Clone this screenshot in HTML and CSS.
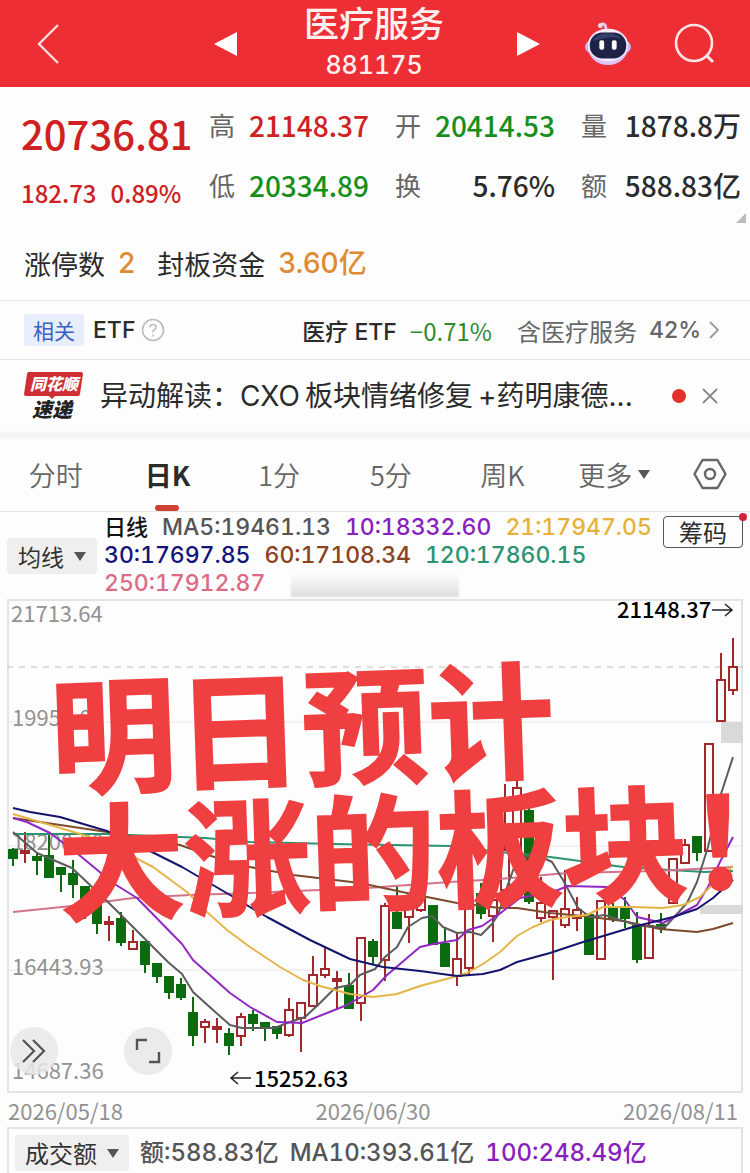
FILE: index.html
```html
<!DOCTYPE html>
<html lang="zh-CN">
<head>
<meta charset="utf-8">
<meta name="viewport" content="width=device-width, initial-scale=1">
<title>医疗服务 881175</title>
<link rel="stylesheet" href="styles.css">
</head>
<body>
<header class="topbar">
  <button class="icon-btn back" aria-label="返回"><svg width="24" height="42" viewBox="0 0 24 42"><path d="M22 2 3 21 22 40" fill="none" stroke="#ffdcdc" stroke-width="2.4"/></svg></button>
  <button class="icon-btn prev" aria-label="上一个"><svg width="24" height="26" viewBox="0 0 24 26"><path d="M0 13 23 1v24z" fill="#fff"/></svg></button>
  <div class="title">
    <h1>医疗服务</h1>
    <p>881175</p>
  </div>
  <button class="icon-btn next" aria-label="下一个"><svg width="24" height="26" viewBox="0 0 24 26"><path d="M24 13 1 1v24z" fill="#fff"/></svg></button>
  <button class="icon-btn" aria-label="智能助手"><svg width="50" height="46" viewBox="0 0 50 46">
    <path d="M17 3q6-3 6 6" fill="none" stroke="#e8c9ee" stroke-width="3" stroke-linecap="round"/>
    <circle cx="17" cy="4" r="2.500" fill="#f3d6ee"/>
    <ellipse cx="25" cy="26" rx="24" ry="11" fill="#c7b4f0"/>
    <ellipse cx="25" cy="26" rx="21" ry="19" fill="#dcc6f8"/>
    <ellipse cx="25" cy="24" rx="21" ry="17" fill="#f7ecff"/>
    <rect x="6" y="11" width="38" height="27" rx="13" fill="#1d2347"/>
    <path d="M9 20q4-8 14-8 12 0 16 5-12-3-30 3z" fill="#35406d"/>
    <rect x="16" y="19" width="5" height="10" rx="2" fill="#fff"/><rect x="29" y="19" width="5" height="10" rx="2" fill="#fff"/>
  </svg></button>
  <button class="icon-btn" aria-label="搜索"><svg width="42" height="42" viewBox="0 0 42 42"><circle cx="20" cy="20" r="18" fill="none" stroke="#ffe4e4" stroke-width="2.6"/><path d="m32 32 7 7" stroke="#ffe4e4" stroke-width="3"/></svg></button>
</header>

<main>
<section class="quote">
  <div class="price">
    <strong>20736.81</strong>
    <p><span>182.73</span><span>0.89%</span></p>
  </div>
  <dl class="stats">
    <div><dt>高</dt><dd class="up">21148.37</dd></div>
    <div><dt>开</dt><dd class="down">20414.53</dd></div>
    <div><dt>量</dt><dd>1878.8万</dd></div>
    <div><dt>低</dt><dd class="down">20334.89</dd></div>
    <div><dt>换</dt><dd>5.76%</dd></div>
    <div><dt>额</dt><dd>588.83亿</dd></div>
  </dl>
  <i class="corner"></i>
</section>

<section class="limit">
  <span>涨停数</span><b>2</b><span>封板资金</span><b>3.60亿</b>
</section>

<section class="etf">
  <span class="tag">相关</span><span class="etf-name">ETF</span>
  <button class="icon-btn" aria-label="说明"><svg width="24" height="24" viewBox="0 0 24 24" fill="none" stroke="#bdbdbd" stroke-width="1.6"><circle cx="12" cy="12" r="10.5"/><path d="M9 9.5q0-3 3-3t3 2.700q0 1.500-1.600 2.500T12 14.500"/><path d="M12 16.500v2"/></svg></button>
  <a href="#etf" class="etf-link"><span class="etf-name">医疗 ETF</span><span class="change">−0.71%</span><span class="muted">含医疗服务</span><span class="muted pct">42%</span><svg width="12" height="20" viewBox="0 0 12 20"><path d="m2 2 8 8-8 8" fill="none" stroke="#999" stroke-width="1.8"/></svg></a>
</section>

<section class="news">
  <svg class="badge" width="60" height="54" viewBox="0 0 60 54" role="img" aria-label="同花顺速递">
    <path d="M5 3h52q2 0 2 2l-3 20q0 2-2 2H31l-3 3-3-3H2q-2 0-2-2L3 5q0-2 2-2z" fill="#cf2f34"/>
    <text x="6" y="21" class="badge-top">同花顺</text>
    <text x="8" y="48" class="badge-bottom">速递</text>
  </svg>
  <a href="#news" class="headline">异动解读：CXO&thinsp;板块情绪修复&thinsp;+药明康德...</a>
  <i class="dot"></i>
  <button class="icon-btn" aria-label="关闭"><svg width="18" height="18" viewBox="0 0 18 18"><path d="m2 2 14 14M16 2 2 16" stroke="#888" stroke-width="1.800"/></svg></button>
</section>

<nav class="tabs">
  <button>分时</button>
  <button class="active" aria-current="true">日K</button>
  <button>1分</button>
  <button>5分</button>
  <button>周K</button>
  <button>更多<i class="caret"></i></button>
  <button aria-label="设置"><svg width="34" height="32" viewBox="0 0 34 32" fill="none" stroke="#666" stroke-width="2.4"><path d="M9.500 2h15L32.500 16l-8 14h-15L1.500 16z" stroke-linejoin="round"/><circle cx="17" cy="16" r="5"/></svg></button>
</nav>

<section class="legend">
  <button class="picker">均线<i class="caret"></i></button>
  <div class="averages">
    <p><span class="c-black">日线</span><span class="c-gray">MA5:19461.13</span><span class="c-purple">10:18332.60</span><span class="c-gold">21:17947.05</span></p>
    <p><span class="c-navy">30:17697.85</span><span class="c-brown">60:17108.34</span><span class="c-teal">120:17860.15</span></p>
    <p><span class="c-pink">250:17912.87</span><i class="smudge"></i></p>
  </div>
  <button class="chips">筹码</button>
</section>

<section class="chart">
  <svg class="plot" viewBox="7 599 736 494" role="img" aria-label="日K线图">
    <path d="M7 722H743M7 846H743M7 970H743" stroke="#e6e6e6"/>
    <path d="M7 667H743" stroke="#c9beb4" stroke-dasharray="6 6"/>
    <path d="M721 722h22v21h-22zM700 905h43v9h-43z" fill="#d9d9d9"/>
    <g class="axis">
      <text x="11" y="622">21713.64</text>
      <text x="12" y="726">19957.07</text>
      <text x="12" y="850">18200.50</text>
      <text x="12" y="975">16443.93</text>
      <text x="12" y="1079">14687.36</text>
    </g>
    <g id="candles"></g>
    <g class="lines">
      <polyline class="l-teal" points="13,834 107,834 130,835 205,838 250,842 333,844 450,846 500,852 550,857 580,861 623,867 670,870 705,872 733,871"/>
      <polyline class="l-pink" points="13,912 72,906 133,898 190,895 250,893 367,888 450,882 500,879 567,873 657,871 733,867"/>
      <polyline class="l-brown" points="13,818 67,826 107,832 180,845 217,858 250,867 293,875 360,883 407,893 457,903 500,908 517,908 550,913 583,916 623,921 660,929 697,932 713,929 733,923"/>
      <polyline class="l-gray" points="13,832 37,853 72,868 90,885 113,907 143,937 168,962 182,974 193,992 213,1010 230,1025 242,1028 275,1028 287,1023 305,1017 320,1003 335,988 350,985 360,975 375,969 385,957 397,947 408,927 422,918 432,916 443,927 457,933 470,932 481,935 492,924 498,915 507,887 515,865 533,853 552,862 563,880 578,908 590,917 605,915 620,920 640,926 665,927 687,903 697,882 708,847 720,797 733,757"/>
      <polyline class="l-purple" points="13,818 27,822 50,833 78,854 113,883 137,898 182,944 193,960 230,993 250,1007 277,1022 302,1023 347,1005 373,990 387,975 420,947 433,944 457,940 468,930 482,926 498,915 520,898 558,890 568,886 607,887 625,900 637,917 663,923 697,905 708,887 720,862 733,837"/>
      <polyline class="l-gold" points="13,814 47,824 80,834 105,842 130,855 153,867 187,892 207,912 227,930 250,947 280,967 303,980 320,986 350,994 373,997 397,994 420,986 450,978 467,973 483,964 500,952 517,936 533,927 550,920 567,917 587,915 603,907 633,907 663,908 683,905 700,897 710,887 733,866"/>
      <polyline class="l-navy" points="13,808 30,812 60,817 90,826 107,831 150,851 182,867 230,895 250,907 267,917 310,940 350,959 383,967 420,971 457,976 483,974 500,970 517,962 550,953 580,943 633,927 673,917 697,909 713,898 723,889 733,880"/>
    </g>
    <g class="marks">
      <text x="617" y="618">21148.37</text>
      <path d="M712 610h20m-7-6 7 6-7 6M251 1078h-20m7-6-7 6 7 6"/>
      <text x="254" y="1087">15252.63</text>
    </g>
    <g class="slogan">
      <text x="52" y="785" transform="rotate(-2 52 785)">明日预计</text>
      <text x="60" y="912" transform="rotate(-2 60 912)">大涨的板块！</text>
    </g>
  </svg>
  <button class="round expand" aria-label="展开"><svg width="26" height="26" viewBox="0 0 26 26"><path d="m2 2 11 11L2 24M12 2l11 11-11 11" fill="none" stroke="#555" stroke-width="2.200"/></svg></button>
  <button class="round full" aria-label="全屏"><svg width="26" height="26" viewBox="0 0 26 26"><path d="M2 12V2h10M24 14v10H14" fill="none" stroke="#555" stroke-width="2.400"/></svg></button>
</section>

<div class="dates"><time>2026/05/18</time><time>2026/06/30</time><time>2026/08/11</time></div>

<section class="volume">
  <button class="picker">成交额<i class="caret"></i></button>
  <span class="c-gray">额:588.83亿</span><span class="c-gray">MA10:393.61亿</span><span class="c-purple">100:248.49亿</span>
</section>
</main>
<script src="chart.js"></script>
</body>
</html>
```

FILE: styles.css
```css
* { box-sizing: border-box; }

body {
  margin: 0;
  background: #fdfdfd;
  color: #2b2b2b;
  font-family: "Noto Sans CJK SC", sans-serif;
  overflow-x: hidden;
}

h1, p, dl, dd { margin: 0; }
a { color: inherit; text-decoration: none; }

button {
  border: 0;
  padding: 0;
  background: none;
  color: inherit;
  font: inherit;
  cursor: pointer;
}

svg { display: block; }

/* Header */
.topbar {
  display: grid;
  grid-template-columns: 95px 1fr 240px 90px 48px 118px;
  align-items: center;
  height: 87px;
  background: #ee2e35;
  color: #fff0f0;
}
.icon-btn { display: flex; justify-content: center; align-items: center; }
.prev { justify-content: flex-end; padding-right: 16px; }
.next { justify-content: flex-start; padding-left: 22px; }
.topbar .icon-btn:last-child { padding-left: 8px; }
.title { text-align: center; }
.title h1 { font-size: 35px; font-weight: 500; line-height: 42px; }
.title p { font: 500 25px/44px Inter, sans-serif; font-variant-numeric: tabular-nums; }

/* Quote */
.quote {
  position: relative;
  display: flex;
  gap: 18px;
  height: 136px;
  padding: 8px 9px 0 21px;
}
.price { width: 170px; padding-top: 2px; color: #cf2022; }
.price strong { display: block; font-size: 40px; font-weight: 500; line-height: 72px; }
.price p { display: flex; gap: 14px; font-size: 24px; font-weight: 500; line-height: 48px; }
.stats {
  flex: 1;
  display: grid;
  grid-template-columns: 160px 160px 1fr;
  grid-auto-rows: 60px;
  column-gap: 26px;
}
.stats div { display: flex; justify-content: space-between; line-height: 60px; white-space: nowrap; }
.stats dt { font-size: 26px; color: #666; }
.stats dd { font-size: 28px; font-weight: 500; }
.stats .up { color: #cf2022; }
.stats .down { color: #16901c; }
.corner {
  position: absolute;
  right: 4px;
  bottom: 0;
  border: 5px solid;
  border-color: transparent #bbb #bbb transparent;
}

.limit {
  display: flex;
  align-items: center;
  gap: 13px;
  height: 77px;
  padding: 3px 24px 0;
  font-size: 27px;
}
.limit b { margin-right: 9px; color: #e08a35; font-family: Inter, "Noto Sans CJK SC", sans-serif; font-size: 28px; font-weight: 500; line-height: 40px; }

/* Related fund */
.etf {
  display: flex;
  align-items: center;
  height: 60px;
  padding: 0 30px 0 24px;
  border-top: 1px solid #e6e6e6;
  border-bottom: 1px solid #e6e6e6;
  font-size: 23px;
  white-space: nowrap;
}
.tag { padding: 0 9px; margin-right: 9px; border-radius: 3px; background: #e8edfb; color: #3a61bd; font-size: 21px; line-height: 32px; }
.etf-name { font-family: Inter, "Noto Sans CJK SC", sans-serif; font-weight: 500; font-size: 23px; }
.etf .icon-btn { margin-left: 6px; }
.etf-link { display: flex; align-items: center; margin-left: auto; }
.change { margin: 0 25px 0 13px; color: #2a8c2e; font-size: 24px; }
.muted { color: #666; font-size: 24px; }
.pct { margin: 0 7px 0 12px; font-family: Inter, sans-serif; font-size: 23px; font-weight: 500; }

/* News */
.news {
  display: flex;
  align-items: center;
  height: 79px;
  padding: 0 31px 8px 24px;
  background: linear-gradient(#fdfdfd 70px, #f2f2f2 76px, #fafafa 79px);
}
.badge { flex: none; margin-right: 16px; }
.badge-top { fill: #fff; font: italic 900 16px "Noto Sans CJK SC", sans-serif; }
.badge-bottom { fill: #222; font: italic 900 20px "Noto Sans CJK SC", sans-serif; }
.headline {
  white-space: nowrap;
  font-family: Inter, "Noto Sans CJK SC", sans-serif;
  font-size: 28px;
  line-height: 42px;
}
.dot { width: 14px; height: 14px; margin: 0 15px 0 auto; border-radius: 50%; background: #e3302b; }

/* Tabs */
.tabs {
  display: grid;
  grid-template-columns: repeat(6, 1fr) 80px;
  height: 73px;
  border-bottom: 1px solid #e6e6e6;
  color: #666;
  font-size: 27px;
  font-weight: 350;
}
.tabs button { display: flex; justify-content: center; align-items: center; position: relative; padding-bottom: 2px; }
.tabs .active { color: #2b2b2b; font-weight: 700; }
.tabs .active::after {
  content: "";
  position: absolute;
  bottom: 0;
  left: calc(50% - 12px);
  width: 24px;
  height: 6px;
  border-radius: 3px;
  background: #cf4034;
}
.caret { border: 6px solid transparent; border-top: 9px solid #555; border-bottom: 0; margin-left: 6px; }

/* Moving averages */
.legend { display: flex; gap: 7px; height: 87px; padding: 0 7px; }
.picker {
  display: flex;
  align-items: center;
  justify-content: center;
  height: 36px;
  border-radius: 4px;
  background: #efefef;
  color: #333;
  font-size: 24px;
}
.picker .caret { margin-left: 10px; }
.legend .picker { width: 90px; margin-top: 26px; flex: none; font-size: 23px; }
.averages {
  flex: 1;
  min-width: 0;
  padding-top: 1px;
  font: 500 23px/28px Inter, "Noto Sans CJK SC", sans-serif;
  font-variant-numeric: tabular-nums;
  white-space: nowrap;
}
.averages p { display: flex; gap: 14px; height: 28px; }
.chips {
  position: relative;
  flex: none;
  width: 80px;
  height: 32px;
  margin-top: 4px;
  border: 1px solid #555;
  border-radius: 4px;
  font-size: 24px;
  line-height: 26px;
}
.chips::after {
  content: "";
  position: absolute;
  top: -4px;
  right: -5px;
  width: 8px;
  height: 8px;
  border-radius: 50%;
  background: #d0223a;
}
.smudge { width: 168px; height: 22px; margin: 6px 0 0 12px; background: linear-gradient(#fafafa, #dedede); filter: blur(1px); }

.c-black { color: #111; font-size: 22px; }
.c-gray { color: #555; }
.c-purple { color: #8a1fc0; }
.c-gold { color: #e6b23c; }
.c-navy { color: #14147a; }
.c-brown { color: #8a431c; }
.c-teal { color: #2c9470; }
.c-pink { color: #dc6c84; }

/* Chart */
.chart { position: relative; margin: 0 7px; box-shadow: 0 0 0 2px #e4e4e4 inset; }
.plot { width: 100%; height: auto; overflow: hidden; }
.axis { fill: #929292; font-size: 22px; }
.marks { fill: #000; font-size: 22px; font-weight: 500; }
.marks path { fill: none; stroke: #222; stroke-width: 1.5; }
.lines { fill: none; stroke-width: 2; stroke-linejoin: round; }
.l-gray { stroke: #5c5c5c; }
.l-purple { stroke: #9128c4; }
.l-gold { stroke: #e5b548; }
.l-navy { stroke: #14146e; }
.l-brown { stroke: #7d4a2c; }
.l-teal { stroke: #2c9470; }
.l-pink { stroke: #d4738a; }
.rise { fill: #fdfdfd; stroke: #a3282c; stroke-width: 2; }
.fall { fill: #0a6b10; stroke: #0a6b10; stroke-width: 2; }
.slogan { fill: #ef3f40; stroke: #ef3f40; stroke-width: 2; font-size: 126px; font-weight: 700; }
.round {
  position: absolute;
  bottom: 18px;
  display: flex;
  align-items: center;
  justify-content: center;
  width: 48px;
  height: 48px;
  border-radius: 50%;
  background: rgba(232, 232, 232, 0.85);
}
.expand { left: 3px; }
.full { left: 117px; }

.dates { display: flex; justify-content: space-between; padding: 0 12px 0 8px; color: #929292; font-size: 22px; line-height: 34px; }

.volume {
  display: flex;
  align-items: center;
  gap: 11px;
  height: 46px;
  margin: 0 7px;
  padding: 4px 6px 0;
  border: 2px solid #e4e4e4;
  border-bottom: 0;
  font: 500 24px/36px Inter, "Noto Sans CJK SC", sans-serif;
  font-variant-numeric: tabular-nums;
  white-space: nowrap;
}
.volume .picker { width: 114px; font-family: "Noto Sans CJK SC", sans-serif; font-size: 24px; font-weight: 400; }
```

FILE: chart.js
```js
// One entry per day: direction, high, body top, body bottom, low (plot coordinates).
const days = [
  ["d",848,850,858,866],["u",832,851,853,863],["d",852,857,860,875],["d",835,856,877,877],
  ["d",867,868,874,892],["d",860,874,884,898],["d",887,887,908,919],["d",905,905,923,934],
  ["u",916,922,924,941],["d",912,919,942,946],["u",930,942,949,949],["d",942,942,964,973],
  ["d",964,964,976,983],["d",977,977,992,999],["d",978,985,997,1000],["d",997,1013,1035,1046],
  ["u",1019,1022,1027,1043],["u",1018,1027,1029,1043],["d",1028,1034,1045,1055],["u",1013,1017,1036,1046],
  ["d",1010,1015,1023,1031],["d",1023,1023,1028,1041],["d",1027,1027,1033,1039],["u",998,1010,1035,1037],
  ["u",1003,1003,1018,1052],["u",956,975,1006,1006],["u",948,969,975,978],["u",971,979,981,1010],
  ["d",973,986,1008,1008],["u",938,938,1003,1021],["d",939,942,956,964],["u",903,906,960,981],
  ["d",885,913,928,928],["u",905,905,917,943],["u",893,895,910,912],["d",906,906,944,944],
  ["d",927,944,966,966],["u",933,959,976,986],["u",900,900,968,975],["d",883,894,913,919],
  ["u",893,900,916,942],["u",784,850,890,890],["u",778,788,850,850],["d",800,811,901,904],
  ["u",877,903,918,922],["u",911,911,917,980],["u",870,909,925,928],["u",897,910,918,931],
  ["d",915,915,954,954],["u",900,901,959,959],["d",903,907,918,922],["d",897,907,918,928],
  ["d",912,926,959,963],["u",914,926,958,958],["d",913,925,928,933],["u",859,859,903,903],
  ["u",839,845,863,863],["d",837,837,852,861],["u",744,744,851,851],["u",653,680,721,721],
  ["u",638,667,690,695]
];

const ns = "http://www.w3.org/2000/svg";
const layer = document.getElementById("candles");

days.forEach(([dir, high, top, bottom, low], i) => {
  const x = 13 + i * 12;
  const candle = document.createElementNS(ns, "path");
  candle.setAttribute("class", dir === "u" ? "rise" : "fall");
  candle.setAttribute("d", `M${x} ${high}V${top}M${x} ${bottom}V${low}M${x - 4} ${top}h8V${bottom}h-8z`);
  layer.append(candle);
});
```
